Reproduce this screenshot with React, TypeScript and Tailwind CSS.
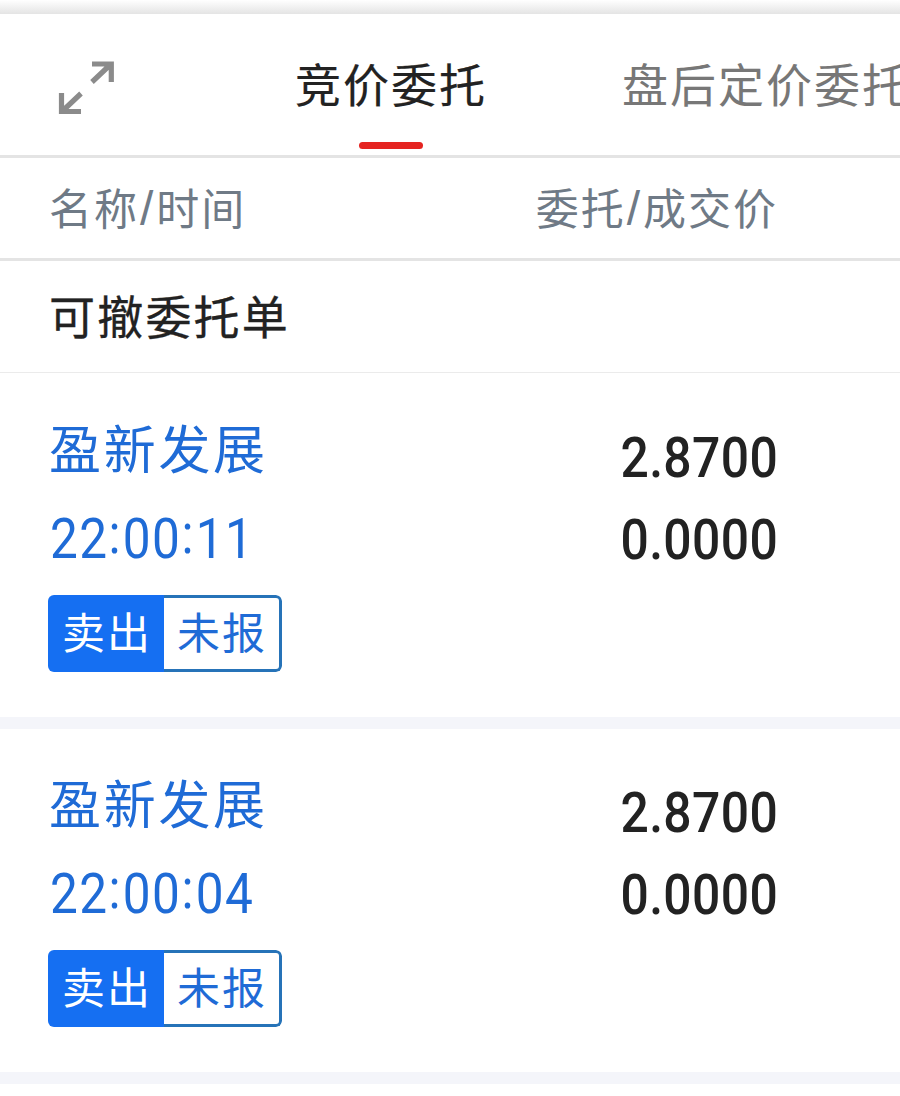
import React from 'react';

interface Order {
  id: number;
  name: string;
  time: string;
  side: string;
  status: string;
  price: string;
  dealPrice: string;
}

const orders: Order[] = [
  { id: 1, name: '盈新发展', time: '22:00:11', side: '卖出', status: '未报', price: '2.8700', dealPrice: '0.0000' },
  { id: 2, name: '盈新发展', time: '22:00:04', side: '卖出', status: '未报', price: '2.8700', dealPrice: '0.0000' },
];

const ExpandIcon: React.FC = () => (
  <svg className="w-14 h-14" viewBox="0 0 56 56" fill="none" stroke="#8b8b8b" strokeWidth="5.2">
    <path d="M34 4h19.300V22M52.500 4.500 34 22" />
    <path d="M23 51.500H3.500V33M4.500 51 23 33.500" />
  </svg>
);

const Slash: React.FC = () => (
  <span className="font-['Liberation_Sans',sans-serif] text-[48px] leading-none pl-px pr-px">/</span>
);

// Colons sit centred on the digits rather than on the baseline
const OrderTime: React.FC<{ value: string }> = ({ value }) => (
  <div className="h-[72px] leading-[72px] w-fit origin-left scale-x-[0.9] font-['Roboto',sans-serif] text-[55px] tracking-[1.6px] text-[#1f6bd6]">
    {value.split(':').map((part, i) => (
      <React.Fragment key={i}>
        {i > 0 && <span className="inline-block -translate-y-[5px] pr-px">:</span>}
        {part}
      </React.Fragment>
    ))}
  </div>
);

const OrderCard: React.FC<{ order: Order }> = ({ order }) => (
  <div className="h-[355px] border-b-12 border-[#f4f5fa] flex justify-between pl-12 pr-[122px]">
    <div className="pt-[37px]">
      <div className="h-[72px] leading-[72px] pl-px text-[52px] tracking-[2.7px] text-[#1f6bd6]">{order.name}</div>
      <div className="pl-[2px] pt-5">
        <OrderTime value={order.time} />
      </div>
      <div className="mt-5 w-[234px] h-[77px] flex rounded-md overflow-hidden text-[43px] tracking-[2px]">
        <div className="w-[116px] pl-[14px] leading-[71px] bg-[#156ff2] text-white">{order.side}</div>
        <div className="flex-1 pl-[13px] leading-[65px] rounded-r-md border-3 border-l-0 border-[#2673b8] text-[#1f6bd6]">{order.status}</div>
      </div>
    </div>
    <div className="pt-[43px] origin-right scale-x-[0.89] text-right font-['Roboto',sans-serif] font-medium text-[56px] leading-[82px] tracking-[0.4px] text-[#222]">
      <div>{order.price}</div>
      <div>{order.dealPrice}</div>
    </div>
  </div>
);

const App: React.FC = () => (
  <div className="w-full h-[1096px] overflow-hidden bg-white font-['Noto_Sans_CJK_SC',sans-serif]">
    <div className="h-3.5 bg-linear-to-b from-white to-[#e4e4e4]" />

    <nav className="h-36 flex whitespace-nowrap border-b-3 border-[#e4e4e4] text-[46px] tracking-[2px]">
      <div className="w-[295px] shrink-0 pl-[58px] pt-[46px]">
        <ExpandIcon />
      </div>
      <button className="w-[327px] shrink-0 flex flex-col items-start font-normal text-[#222]">
        <span className="h-32 leading-[137px] [-webkit-text-stroke:0.2px]">竞价委托</span>
        <span className="ml-16 w-16 h-[7px] rounded-full bg-[#e52421]" />
      </button>
      <button className="h-32 shrink-0 leading-[137px] text-[#777]">盘后定价委托</button>
    </nav>

    <div className="h-[103px] flex justify-between pl-[49px] pr-[122px] border-b-3 border-[#e4e4e4] text-[43px] tracking-[2px] leading-[97px] text-[#6f7a86]">
      <span>名称<Slash />时间</span>
      <span>委托<Slash />成交价</span>
    </div>

    <h2 className="h-28 pl-[49px] border-b border-[#ebebeb] text-[46px] tracking-[2.2px] leading-[107px] text-[#222] [-webkit-text-stroke:0.3px]">可撤委托单</h2>

    <div className="pt-px">
      {orders.map(order => (
        <OrderCard key={order.id} order={order} />
      ))}
    </div>
  </div>
);

export default App;
